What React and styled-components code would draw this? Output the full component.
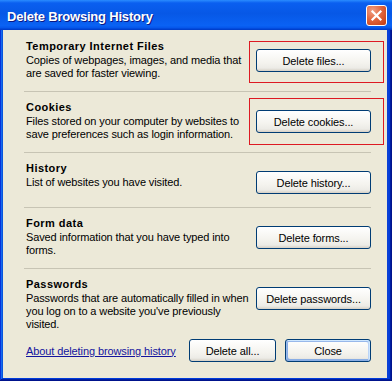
import React from "react";
import styled, { createGlobalStyle, css } from "styled-components";

const Global = createGlobalStyle`
  html, body { margin: 0; padding: 0; background: #ece9d8; }
  body { font-family: "Liberation Sans", Arial, sans-serif; }
`;

const Window = styled.div`
  width: 392px;
  height: 381px;
  display: flex;
  flex-direction: column;
  overflow: hidden;
`;

const TitleBar = styled.div`
  flex: none;
  height: 30px;
  box-sizing: border-box;
  display: flex;
  align-items: center;
  justify-content: space-between;
  padding: 0 5px 0 7px;
  background: linear-gradient(
    180deg,
    #2a8cff 0%,
    #0a5ff0 10%,
    #0758e6 45%,
    #0a62f4 85%,
    #0556ea 93%,
    #0040d0 97%,
    #003dc8 100%
  );
`;

const Title = styled.span`
  font: bold 13px "Liberation Sans", Arial, sans-serif;
  letter-spacing: -0.2px;
  color: #fff;
  text-shadow: 1px 1px #0a1883;
  padding-top: 2px;
`;

const CloseBox = styled.div`
  width: 21px;
  height: 21px;
  box-sizing: border-box;
  border: 1px solid #fff;
  border-radius: 3px;
  background: radial-gradient(circle at 30% 25%, #f0a085 0%, #e2673f 45%, #cf4a20 80%, #c03c14 100%);
  display: flex;
  align-items: center;
  justify-content: center;
`;

const Frame = styled.div`
  flex: 1;
  display: flex;
  flex-direction: column;
  padding: 0 5px 3px 3px;
  background: #0a3fd6;
  box-shadow: inset -1px -1px #00138c, inset 1px 0 #0831d9, inset -2px -2px #001ea0,
    inset 2px 0 #166aee, inset -3px -3px #003bda, inset 3px 0 #0855dd;
`;

const Body = styled.div`
  flex: 1;
  display: flex;
  flex-direction: column;
  background: #ece9d8;
  padding: 0 16px 0 21px;
  color: #000;
  font-size: 11px;
`;

const Section = styled.section`
  display: grid;
  grid-template-columns: 1fr 115px;
  column-gap: 10px;
  padding: ${(p) => (p.$first ? 10 : 9)}px 0 ${(p) => (p.$last ? 8 : 11)}px 2px;
  border-bottom: ${(p) => (p.$last ? "none" : "1px solid #c7c4b4")};
`;

const TextBlock = styled.div`
  display: flex;
  flex-direction: column;
  gap: 1px;
  min-width: 0;
`;

const Heading = styled.div`
  font-weight: bold;
  font-size: 11px;
  line-height: 13px;
  letter-spacing: 0.45px;
`;

const Desc = styled.div`
  font-size: 11px;
  line-height: 13px;
  letter-spacing: -0.12px;
  white-space: nowrap;
`;

const ButtonCell = styled.div`
  box-sizing: border-box;
  padding-top: 9px;
  min-height: 34px;
`;

const ButtonWrap = styled.div`
  position: relative;
  width: fit-content;
`;

const Mark = styled.div`
  position: absolute;
  left: -7px;
  right: -13px;
  top: ${(p) => p.$top}px;
  bottom: ${(p) => p.$bottom}px;
  border: 1px solid #dd1a22;
  pointer-events: none;
`;

const Button = styled.button`
  box-sizing: border-box;
  width: ${(p) => p.$w || 115}px;
  height: 23px;
  padding: 0;
  display: block;
  font: 11px "Liberation Sans", Arial, sans-serif;
  letter-spacing: -0.1px;
  color: #000;
  background: linear-gradient(180deg, #ffffff, #f4f3ee 60%, #ecebe6 86%, #d6d0c5);
  border: 1px solid #003c74;
  border-radius: 3px;
  ${(p) =>
    p.$default &&
    css`
      box-shadow: inset -1px 1px #cee7ff, inset 1px 2px #98b8ea, inset -2px 2px #bcd4f6,
        inset 1px -1px #89ade4, inset 2px -2px #89ade4;
    `}
`;

const BottomRow = styled.div`
  display: flex;
  align-items: center;
  gap: 9px;
  padding-left: 2px;
`;

const Link = styled.a`
  color: #14149e;
  text-decoration: underline;
  font-size: 11px;
  letter-spacing: -0.1px;
  margin-right: auto;
  cursor: pointer;
`;

const sections = [
  {
    title: "Temporary Internet Files",
    lines: ["Copies of webpages, images, and media that", "are saved for faster viewing."],
    button: "Delete files...",
    mark: { top: -8, bottom: -11 },
  },
  {
    title: "Cookies",
    lines: ["Files stored on your computer by websites to", "save preferences such as login information."],
    button: "Delete cookies...",
    mark: { top: -12, bottom: -12 },
  },
  {
    title: "History",
    lines: ["List of websites you have visited."],
    button: "Delete history...",
  },
  {
    title: "Form data",
    lines: ["Saved information that you have typed into", "forms."],
    button: "Delete forms...",
  },
  {
    title: "Passwords",
    lines: [
      "Passwords that are automatically filled in when",
      "you log on to a website you've previously",
      "visited.",
    ],
    button: "Delete passwords...",
  },
];

export default function App() {
  return (
    <>
      <Global />
      <Window>
        <TitleBar>
          <Title>Delete Browsing History</Title>
          <CloseBox>
            <svg width="13" height="13" viewBox="0 0 13 13">
              <path d="M2.5 2.5 L10.5 10.5 M10.5 2.5 L2.5 10.5" stroke="#fff" strokeWidth="2.2" strokeLinecap="square" />
            </svg>
          </CloseBox>
        </TitleBar>
        <Frame>
          <Body>
            {sections.map((s, i) => (
              <Section key={s.title} $first={i === 0} $last={i === sections.length - 1}>
                <TextBlock>
                  <Heading>{s.title}</Heading>
                  <Desc>
                    {s.lines.map((l, j) => (
                      <React.Fragment key={j}>
                        {l}
                        {j < s.lines.length - 1 && <br />}
                      </React.Fragment>
                    ))}
                  </Desc>
                </TextBlock>
                <ButtonCell>
                  <ButtonWrap>
                    <Button>{s.button}</Button>
                    {s.mark && <Mark $top={s.mark.top} $bottom={s.mark.bottom} />}
                  </ButtonWrap>
                </ButtonCell>
              </Section>
            ))}
            <BottomRow>
              <Link>About deleting browsing history</Link>
              <Button $w={87}>Delete all...</Button>
              <Button $w={86} $default>
                Close
              </Button>
            </BottomRow>
          </Body>
        </Frame>
      </Window>
    </>
  );
}
